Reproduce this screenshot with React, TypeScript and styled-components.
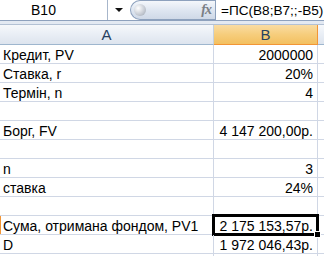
import React from 'react';
import styled, { createGlobalStyle } from 'styled-components';

const GRID = '#d0d7e5';

const GlobalStyle = createGlobalStyle`
  body {
    margin: 0;
    background: #ffffff;
    font-family: 'Liberation Sans', Arial, sans-serif;
  }
`;

const Frame = styled.div`
  width: 324px;
  height: 256px;
  overflow: hidden;
  background: #ffffff;
`;

const FormulaBar = styled.div`
  display: flex;
  height: 20px;
  border-bottom: 1px solid #8ea1bd;
  background: #ffffff;
`;

const NameBox = styled.div`
  width: 108px;
  border-right: 1px solid #a7b6cb;
  display: flex;
  align-items: center;
  justify-content: center;
  font-size: 14px;
  color: #000;
  padding-right: 20px;
  box-sizing: border-box;
`;

const DropZone = styled.div`
  width: 22px;
  display: flex;
  align-items: center;
  justify-content: center;
`;

const DropArrow = styled.div`
  width: 0;
  height: 0;
  border-left: 4px solid transparent;
  border-right: 4px solid transparent;
  border-top: 4px solid #111;
`;

const FxPill = styled.div`
  width: 85px;
  height: 20px;
  box-sizing: border-box;
  border: 1px solid #8da1bd;
  border-right: none;
  border-radius: 10px 0 0 10px;
  background: linear-gradient(#f4f7fb, #dde5f0 55%, #cfd9e7);
  display: flex;
  align-items: center;
  justify-content: space-between;
  padding: 0 4px 0 3px;
`;

const Knob = styled.div`
  width: 12px;
  height: 12px;
  border-radius: 50%;
  background: radial-gradient(circle at 35% 35%, #ffffff, #c9ced6 55%, #9aa2ad);
`;

const Fx = styled.span`
  font-family: 'Liberation Serif', 'Times New Roman', serif;
  font-style: italic;
  font-weight: bold;
  font-size: 14px;
  color: #7b7f86;
  letter-spacing: -1px;
`;

const FormulaInput = styled.div`
  flex: 1;
  border-left: 1px solid #8da1bd;
  display: flex;
  align-items: center;
  padding-left: 5px;
  font-size: 13.6px;
  color: #000;
  white-space: nowrap;
`;

const Strip = styled.div`
  height: 3px;
  background: #e3e9f2;
  border-bottom: 1px solid #b3c1d4;
`;

const Sheet = styled.div`
  display: grid;
  grid-template-columns: 214px 104px 1fr;
`;

const HeaderCell = styled.div<{ $active?: boolean }>`
  height: 20px;
  box-sizing: border-box;
  border-right: 1px solid ${({ $active }) => ($active ? '#f29536' : '#c5d1de')};
  border-bottom: 1px solid ${({ $active }) => ($active ? '#f29536' : '#9eb6ce')};
  background: ${({ $active }) =>
    $active
      ? 'linear-gradient(#f9dca3, #f6cd7c 50%, #f3c060)'
      : 'linear-gradient(#f6f8fb, #e9eef5 50%, #dde4ee)'};
  display: flex;
  align-items: center;
  justify-content: center;
  font-size: 15px;
  color: #27415f;
`;

const Cell = styled.div<{ $align?: 'left' | 'right'; $selected?: boolean; $rowMark?: boolean }>`
  position: relative;
  height: 19px;
  box-sizing: border-box;
  border-right: 1px solid ${GRID};
  border-bottom: 1px solid ${GRID};
  padding: 2px 4px 0 3px;
  font-size: 14px;
  line-height: 16px;
  color: #000;
  white-space: nowrap;
  text-align: ${({ $align }) => $align ?? 'left'};
  box-shadow: ${({ $rowMark }) => ($rowMark ? 'inset 1px 0 #f29536' : 'none')};

  ${({ $selected }) =>
    $selected &&
    `
    &::after {
      content: '';
      position: absolute;
      left: -2px;
      top: -2px;
      right: -2px;
      bottom: -2px;
      border: 3px solid #000;
      pointer-events: none;
    }
    &::before {
      content: '';
      position: absolute;
      right: -4px;
      bottom: -4px;
      width: 5px;
      height: 5px;
      background: #000;
      border: 1px solid #fff;
      z-index: 2;
    }
  `}
`;

const rows: { label: string; value: string; selected?: boolean }[] = [
  { label: 'Кредит, PV', value: '2000000' },
  { label: 'Ставка, r', value: '20%' },
  { label: 'Термін, n', value: '4' },
  { label: '', value: '' },
  { label: 'Борг, FV', value: '4 147 200,00р.' },
  { label: '', value: '' },
  { label: 'n', value: '3' },
  { label: 'ставка', value: '24%' },
  { label: '', value: '' },
  { label: 'Сума, отримана фондом, PV1', value: '2 175 153,57р.', selected: true },
  { label: 'D', value: '1 972 046,43р.' },
  { label: '', value: '' },
];

export default function App() {
  return (
    <Frame>
      <GlobalStyle />
      <FormulaBar>
        <NameBox>B10</NameBox>
        <DropZone>
          <DropArrow />
        </DropZone>
        <FxPill>
          <Knob />
          <Fx>fx</Fx>
        </FxPill>
        <FormulaInput>=ПС(B8;B7;;-B5)</FormulaInput>
      </FormulaBar>
      <Strip />
      <Sheet>
        <HeaderCell>A</HeaderCell>
        <HeaderCell $active>B</HeaderCell>
        <HeaderCell />
        {rows.map((row, i) => (
          <React.Fragment key={i}>
            <Cell $rowMark={row.selected}>{row.label}</Cell>
            <Cell $align="right" $selected={row.selected}>
              {row.value}
            </Cell>
            <Cell />
          </React.Fragment>
        ))}
      </Sheet>
    </Frame>
  );
}
